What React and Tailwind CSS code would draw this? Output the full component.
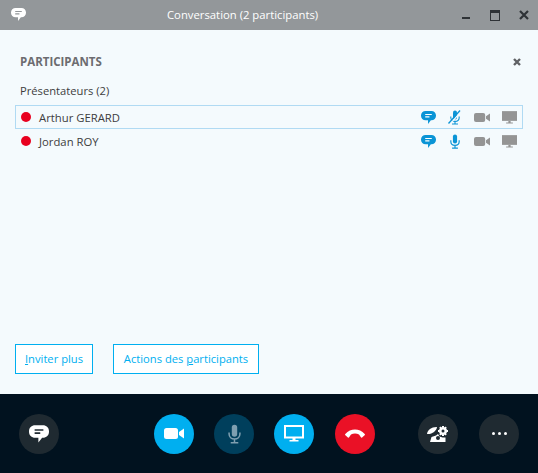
import React from "react";

const font = "font-['Open_Sans','Noto_Sans',sans-serif]";

const Bubble = ({ className, lines = "#fff" }) => (
  <svg viewBox="0 0 16 16" className={className}>
    <path d="M5 1h6c3 0 5 2 5 4.800v.4C16 9 14 11 11 11H10.500L7.500 14.800V11H5C2 11 0 9 0 6.200v-.4C0 3 2 1 5 1z" fill="currentColor" />
    <path d="M4.500 4.800h7M4.500 7.300h4.500" stroke={lines} strokeWidth="1.300" />
  </svg>
);

const Mic = ({ className }) => (
  <svg viewBox="0 0 12 18" className={className} fill="none" stroke="currentColor">
    <rect x="3.500" y="0.500" width="5" height="11" rx="2.500" fill="currentColor" stroke="none" />
    <path d="M1 7.500v1.500c0 2.800 2.200 4.600 5 4.600s5-1.800 5-4.600V7.500M6 13.500v3M2.500 17h7" strokeWidth="1.400" />
  </svg>
);

const MutedMic = ({ className }) => (
  <svg viewBox="0 0 14 15" className={className} fill="none">
    <rect x="5" y="0.500" width="4" height="9" rx="2" fill="#0a94d6" />
    <path d="M2.800 6.500v1c0 2.400 1.800 3.900 4.200 3.900s4.200-1.500 4.200-3.900v-1M7 11.500v2M4 14h6" stroke="#0a94d6" strokeWidth="1.100" />
    <path d="M2.500 13.500L13.500 1" stroke="#f4fafd" strokeWidth="1.200" />
    <path d="M0.500 13.500L12 0.500" stroke="#0a94d6" strokeWidth="1.300" />
  </svg>
);

const Camera = ({ className }) => (
  <svg viewBox="0 0 20 11" className={className} fill="currentColor">
    <rect x="0" y="0" width="14" height="11" rx="2.500" />
    <path d="M15 4L20 0.500v10L15 7z" />
  </svg>
);

const Screen = ({ className, outline }) => (
  <svg viewBox="0 0 20 17" className={className}>
    {outline ? (
      <rect x="1" y="1" width="18" height="11.500" fill="none" stroke="currentColor" strokeWidth="2" />
    ) : (
      <rect x="0" y="0" width="20" height="13" fill="currentColor" />
    )}
    <path d="M8.500 13h3v2h-3zM5.500 15h9v1.500h-9z" fill="currentColor" />
  </svg>
);

const Row = ({ name, active, muted }) => (
  <div className={`flex h-6 items-center border pl-[5px] pr-[5px] ${active ? "border-[#b0daf3]" : "border-transparent"}`}>
    <span className="h-[10px] w-[10px] rounded-full bg-[#e8001f]" />
    <span className="ml-2 flex-1 pt-[2px] text-[11.3px] text-[#3d3d3d]">{name}</span>
    <Bubble className="h-[15px] w-[15px] text-[#0a94d6]" />
    <div className="ml-[12px] flex w-[13px] justify-center">
      {muted ? (
        <MutedMic className="h-[15px] w-[14px] shrink-0" />
      ) : (
        <Mic className="h-[15px] w-[10px] text-[#0a94d6]" />
      )}
    </div>
    <Camera className="ml-[13px] h-[11px] w-4 text-[#949494]" />
    <Screen className="ml-[12px] h-[13px] w-[15px] text-[#949494]" />
  </div>
);

const Circle = ({ className, children }) => (
  <div className={`flex h-10 w-10 shrink-0 items-center justify-center rounded-full ${className}`}>
    {children}
  </div>
);

const App = () => {
  return (
    <div className={`flex h-[473px] w-[538px] flex-col overflow-hidden bg-[#f4fafd] ${font}`}>
      {/* title bar */}
      <div className="flex h-[30px] shrink-0 items-center bg-[#93979a] pl-[11px] pr-[9px]">
        <Bubble className="mb-[2px] h-[15px] w-[15px] text-white" lines="#93979a" />
        <div className="ml-[141px] w-[152px] whitespace-nowrap text-[11.3px] text-white">Conversation (2 participants)</div>
        <div className="ml-auto flex items-center text-[#2e3236]">
          <span className="mt-[5px] h-[2px] w-2 bg-current" />
          <span className="ml-[20px] h-[11px] w-[10px] border border-t-[3px] border-current" />
          <svg viewBox="0 0 10 10" className="ml-[19px] h-[10px] w-[10px]">
            <path d="M1 1l8 8M9 1l-8 8" stroke="currentColor" strokeWidth="2.200" />
          </svg>
        </div>
      </div>

      {/* participants */}
      <div className="flex flex-1 flex-col px-[15px] pt-[23px]">
        <div className="flex items-center justify-between pl-[5px] pr-[2px]">
          <h2 className="text-[11.5px] font-bold leading-[17px] text-[#6c6c70]">PARTICIPANTS</h2>
          <svg viewBox="0 0 8 8" className="h-2 w-2 text-[#5f6165]">
            <path d="M1 1l6 6M7 1L1 7" stroke="currentColor" strokeWidth="2.400" />
          </svg>
        </div>
        <div className="mt-[12px] pl-[5px] text-[11.2px] leading-[17px] text-[#3d3d3d]">Présentateurs (2)</div>
        <div className="mt-[6px] flex flex-col">
          <Row name="Arthur GERARD" active muted />
          <Row name="Jordan ROY" />
        </div>
        <div className="mt-auto mb-5 flex gap-5">
          <button className="h-[30px] w-[78px] border border-[#00aff0] bg-white text-[11.2px] text-[#00aff0]">
            <span className="underline">I</span>nviter plus
          </button>
          <button className="h-[30px] w-[146px] border border-[#00aff0] bg-white text-[11.2px] text-[#00aff0]">
            Actions des <span className="underline">p</span>articipants
          </button>
        </div>
      </div>

      {/* call controls */}
      <div className="flex h-[79px] shrink-0 items-center bg-[#01121f] pl-[19px]">
        <Circle className="bg-[#1f2a31] text-white">
          <Bubble className="h-5 w-5" lines="#1f2a31" />
        </Circle>
        <Circle className="ml-[95px] bg-[#00aff0] text-white">
          <Camera className="h-[11px] w-5" />
        </Circle>
        <Circle className="ml-5 bg-[#003f5c] text-[#7f9fb0]">
          <Mic className="h-5 w-[13px]" />
        </Circle>
        <Circle className="ml-5 bg-[#00aff0] text-white">
          <Screen className="h-[17px] w-5" outline />
        </Circle>
        <Circle className="ml-[21px] bg-[#ea1126] text-white">
          <svg viewBox="0 0 20 9" className="h-[9px] w-5">
            <path d="M0.300 5C3 1.800 6.500 0.500 10 0.500s7 1.300 9.700 4.500c.4.500.3 1-.1 1.300l-2.500 2.200c-.4.300-.9.200-1.200-.2L14 5.500c-1.200-.6-2.500-.9-4-.9s-2.800.3-4 .9L4.100 8.300c-.3.400-.8.500-1.200.2L.4 6.300C0 6 -.1 5.500.3 5z" fill="currentColor" />
          </svg>
        </Circle>
        <Circle className="ml-[43px] bg-[#1f2a31] text-white">
          <svg viewBox="0 0 22 16" className="h-4 w-[22px]" fill="currentColor">
            <path d="M0 8C.5 4 4.500 .8 10 1 9.500 5 5 8.500 0 8z" />
            <path d="M3 16l1.500-5L9 9.500 11 8l1.500 2.500 3 1 3 0V16z" />
            <circle cx="11" cy="12" r="2" fill="#1f2a31" />
            <path d="M16 1a4 4 0 1 0 0 8 4 4 0 0 0 0-8zm0 2.500a1.500 1.500 0 1 1 0 3 1.500 1.500 0 0 1 0-3z" fillRule="evenodd" />
            <path d="M15 0h2v1.500h-2zM15 8.500h2V10h-2zM11 4h1.500v2H11zM19.500 4H21v2h-1.500zM12.300 1.500l1.200-.9 1 1.200-1.200.9zM19.700 1.500l-1.200-.9-1 1.200 1.200.9zM12.300 8.500l1.200.9 1-1.200-1.200-.9zM19.700 8.500l-1.200.9-1-1.200 1.200-.9z" />
          </svg>
        </Circle>
        <Circle className="ml-[21px] gap-[3px] bg-[#1f2a31]">
          <span className="h-[3px] w-[3px] rounded-full bg-white" />
          <span className="h-[3px] w-[3px] rounded-full bg-white" />
          <span className="h-[3px] w-[3px] rounded-full bg-white" />
        </Circle>
      </div>
    </div>
  );
};

export default App;
